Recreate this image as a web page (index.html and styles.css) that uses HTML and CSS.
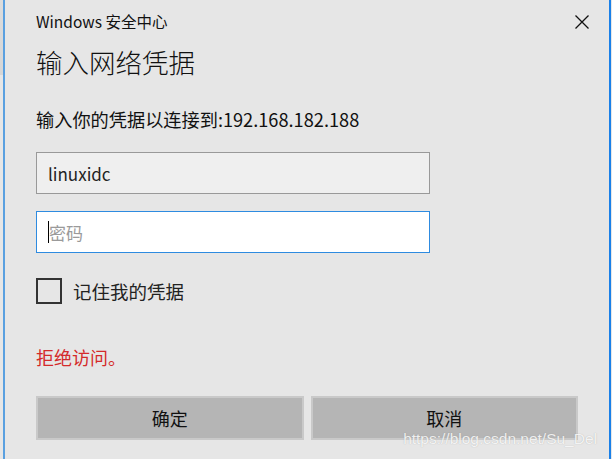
FILE: index.html
```html
<!DOCTYPE html>
<html lang="zh-CN">
<head>
  <meta charset="UTF-8" />
  <title>Windows 安全中心</title>
  <link rel="stylesheet" href="styles.css">
</head>
<body>

  <div class="edge"></div>

  <div class="dialog">
    <div class="titlebar">
      <span>Windows 安全中心</span>
      <button type="button" class="close" aria-label="关闭">
        <svg width="14" height="14" viewBox="0 0 14 14">
          <path d="M0.5 0.5 L13.5 13.5 M13.5 0.5 L0.5 13.5" stroke="#111" stroke-width="1.3" fill="none" />
        </svg>
      </button>
    </div>

    <h1>输入网络凭据</h1>
    <p class="hint">输入你的凭据以连接到:192.168.182.188</p>

    <div class="field user">linuxidc</div>
    <div class="field pass"><span class="caret"></span><span class="placeholder">密码</span></div>

    <label class="remember">
      <span class="box"></span>
      记住我的凭据
    </label>

    <p class="error">拒绝访问。</p>

    <div class="buttons">
      <button type="button" class="btn">确定</button>
      <button type="button" class="btn">取消</button>
    </div>

    <div class="watermark">https://blog.csdn.net/Su_Del</div>
  </div>

</body>
</html>
```

FILE: styles.css
```css
* { margin: 0; padding: 0; box-sizing: border-box; }
body {
  font-family: "Open Sans", "Noto Sans CJK SC", sans-serif;
  background: #e6e6e6;
  display: flex;
  width: 612px;
  height: 459px;
  overflow: hidden;
  color: #000;
}
.edge {
  width: 3px;
  background: linear-gradient(#dcdcdc 0, #d6d6d6 75px, #e6e6e6 75px);
}
.dialog {
  position: relative;
  width: 608px;
  border-left: 2px solid #5aa0e0;
  border-right: 2px solid #1a80e8;
  padding: 9px 31px 0 31px;
}
.titlebar {
  display: flex;
  justify-content: space-between;
  align-items: center;
  height: 24px;
  font-size: 15.5px;
  font-family: "Noto Sans CJK SC", sans-serif;
  color: #111;
}
.close {
  background: none;
  border: none;
  display: flex;
  margin-right: -11px;
  margin-top: 2px;
}
h1 {
  margin-top: 12px;
  font-size: 26.5px;
  line-height: 34px;
  font-weight: 300;
  font-family: "Noto Sans CJK SC", sans-serif;
  color: #111;
}
.hint {
  margin-top: 28px;
  font-size: 18.2px;
  line-height: 24px;
  font-family: "Noto Sans CJK SC", sans-serif;
  color: #111;
}
.field {
  width: 394px;
  height: 42px;
  padding-left: 11px;
  display: flex;
  align-items: center;
  font-size: 17px;
  font-family: "Noto Sans CJK SC", sans-serif;
}
.user {
  margin-top: 21px;
  background: #efefef;
  border: 1px solid #999;
  color: #222;
}
.pass {
  margin-top: 17px;
  background: #fff;
  border: 1px solid #2e8be0;
}
.caret {
  width: 1px;
  height: 22px;
  background: #000;
}
.placeholder { color: #9a9a9a; }
.remember {
  margin-top: 25px;
  display: flex;
  align-items: center;
  gap: 11px;
  height: 26px;
  font-size: 18.5px;
  font-family: "Noto Sans CJK SC", sans-serif;
  color: #222;
}
.box {
  width: 26px;
  height: 26px;
  border: 2px solid #333;
}
.error {
  margin-top: 41px;
  font-size: 18px;
  line-height: 24px;
  color: #d42a2a;
  font-family: "Noto Sans CJK SC", sans-serif;
}
.buttons {
  margin-top: 27px;
  display: grid;
  grid-template-columns: 1fr 1fr;
  gap: 7px;
}
.btn {
  height: 44px;
  background: #b5b5b5;
  border: 2px solid #c9c9c9;
  font-size: 18px;
  font-family: "Noto Sans CJK SC", sans-serif;
  color: #111;
}
.watermark {
  position: absolute;
  right: 12px;
  bottom: 11px;
  font-family: "Liberation Sans", Arial, sans-serif;
  font-size: 15.5px;
  color: rgba(255, 255, 255, 0.85);
  text-shadow: 0 0 1px rgba(120, 120, 120, 0.5);
}
```
